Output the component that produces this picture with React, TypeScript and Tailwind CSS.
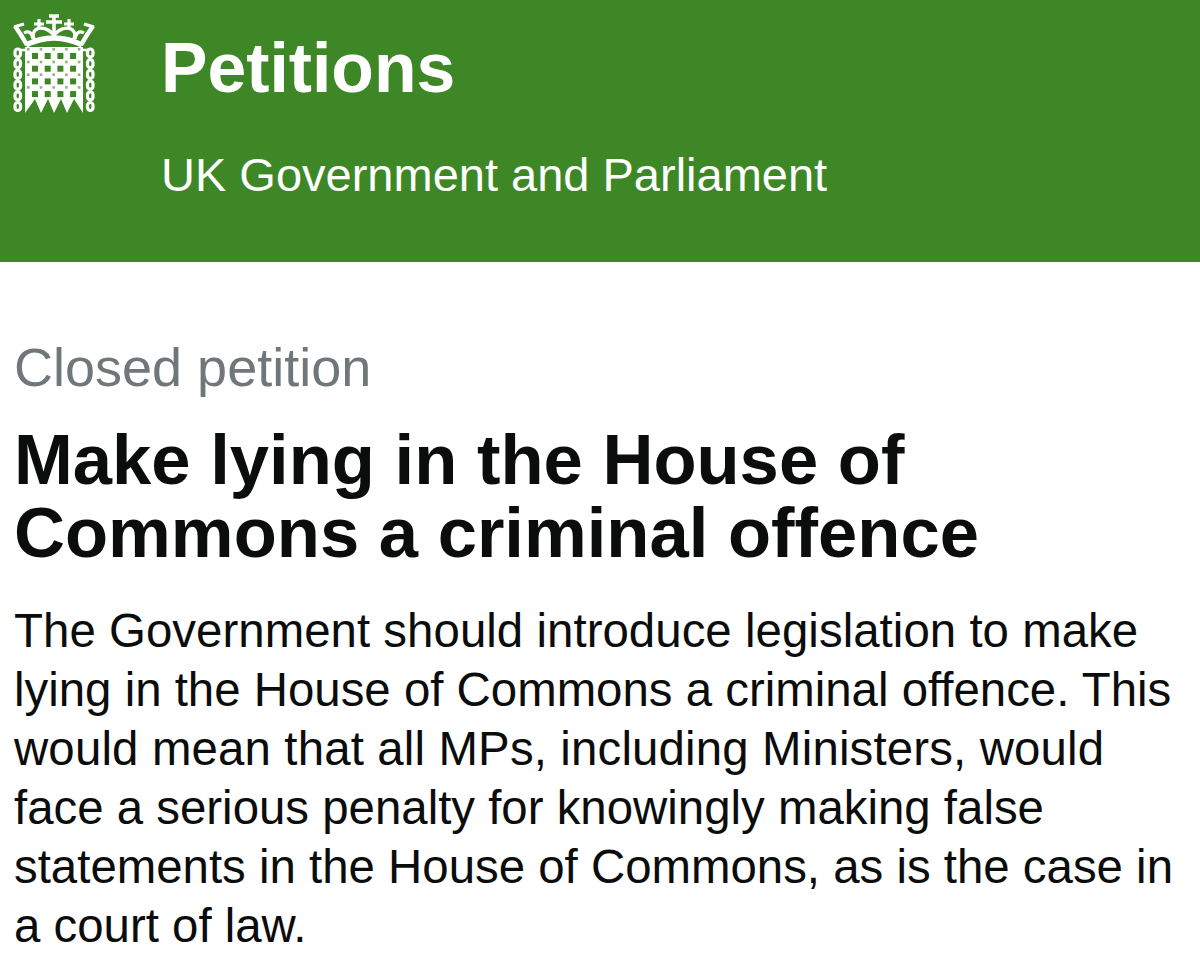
const para = [
  { text: "The Government should introduce legislation to make", cls: "tracking-[0.04px]" },
  { text: "lying in the House of Commons a criminal offence. This", cls: "" },
  { text: "would mean that all MPs, including Ministers, would", cls: "tracking-[0.15px]" },
  { text: "face a serious penalty for knowingly making false", cls: "" },
  { text: "statements in the House of Commons, as is the case in", cls: "" },
  { text: "a court of law.", cls: "" },
];

const GREEN = "#3d8726";

function Portcullis() {
  const holes = [];
  for (let y = 0; y < 4; y++) {
    for (let x = 0; x < 4; x++) {
      holes.push(<rect key={`${x}-${y}`} x={32 + x * 12.7} y={53 + y * 12.7} width={6} height={6} fill={GREEN} />);
    }
  }
  const dots = [];
  for (let y = 0; y < 4; y++) {
    for (let x = 0; x < 5; x++) {
      dots.push(<rect key={`d${x}-${y}`} x={27 + x * 12.7} y={48 + y * 12.7} width={2.6} height={2.6} fill={GREEN} opacity={0.6} />);
    }
  }
  const chain = [];
  for (let i = 0; i < 6; i++) {
    chain.push(<rect key={`l${i}`} x={15} y={49 + i * 10.7} width={5.5} height={8} rx={2.7} fill="none" stroke="#fff" strokeWidth={3.2} />);
    chain.push(<rect key={`r${i}`} x={87.5} y={49 + i * 10.7} width={5.5} height={8} rx={2.7} fill="none" stroke="#fff" strokeWidth={3.2} />);
  }
  return (
    <svg width="110" height="120" viewBox="0 0 110 120" className="shrink-0">
      {/* crown */}
      <g fill="none" stroke="#fff" strokeWidth={3.2}>
        <path d="M26 45 Q54 31 82 45" strokeWidth={5.5} />
        <path d="M54 15 V36 M46 22 H62 M49 16 H59" strokeWidth={3.6} />
        <path d="M54 35 C48 28 41 27 37 29 C33 31 32 36 35 40" />
        <path d="M54 35 C60 28 67 27 71 29 C75 31 76 36 73 40" />
        <path d="M39 19 V29 M34 24 H44" />
        <path d="M69 19 V29 M64 24 H74" />
        <path d="M15 26 C20 33 23 38 27 45" strokeWidth={4.5} />
        <path d="M93 26 C88 33 85 38 81 45" strokeWidth={4.5} />
        <path d="M14 27 L24 24 M94 27 L84 24" />
        <path d="M24 33 C29 30 32 33 33 39 M84 33 C79 30 76 33 75 39" />
      </g>
      {/* portcullis */}
      <path d="M25 47 H83 V113 L74 99 L67 113 L61 99 L54 113 L48 99 L41 113 L35 99 L25 113 Z" fill="#fff" />
      {dots}
      {holes}
      {chain}
      <path d="M20 50 H26 M82 50 H88" stroke="#fff" strokeWidth={2.4} />
    </svg>
  );
}

export default function App() {
  return (
    <div className="h-[960px] w-[1200px] overflow-hidden bg-white font-['Liberation_Sans',Arial,sans-serif]">
      <header className="flex h-[262px] items-start bg-[#3d8726] text-white">
        <Portcullis />
        <div className="ml-[51px] pt-[28px]">
          <div className="text-[69.7px] font-bold leading-[80px]">Petitions</div>
          <div className="mt-[40px] text-[47px] leading-[54px]">UK Government and Parliament</div>
        </div>
      </header>
      <main className="px-[14px] pt-[75px]">
        <div className="text-[54px] leading-[60px] text-[#6f777b]">Closed petition</div>
        <h1 className="mt-[26px] text-[70.6px] font-bold leading-[73px] text-[#0b0c0c]">
          Make lying in the House of
          <br />
          Commons a criminal offence
        </h1>
        <div className="mt-[32px] text-[47.4px] leading-[59px] text-[#0b0c0c]">
          {para.map((line) => (
            <div key={line.text} className={`whitespace-nowrap ${line.cls}`}>{line.text}</div>
          ))}
        </div>
      </main>
    </div>
  );
}
